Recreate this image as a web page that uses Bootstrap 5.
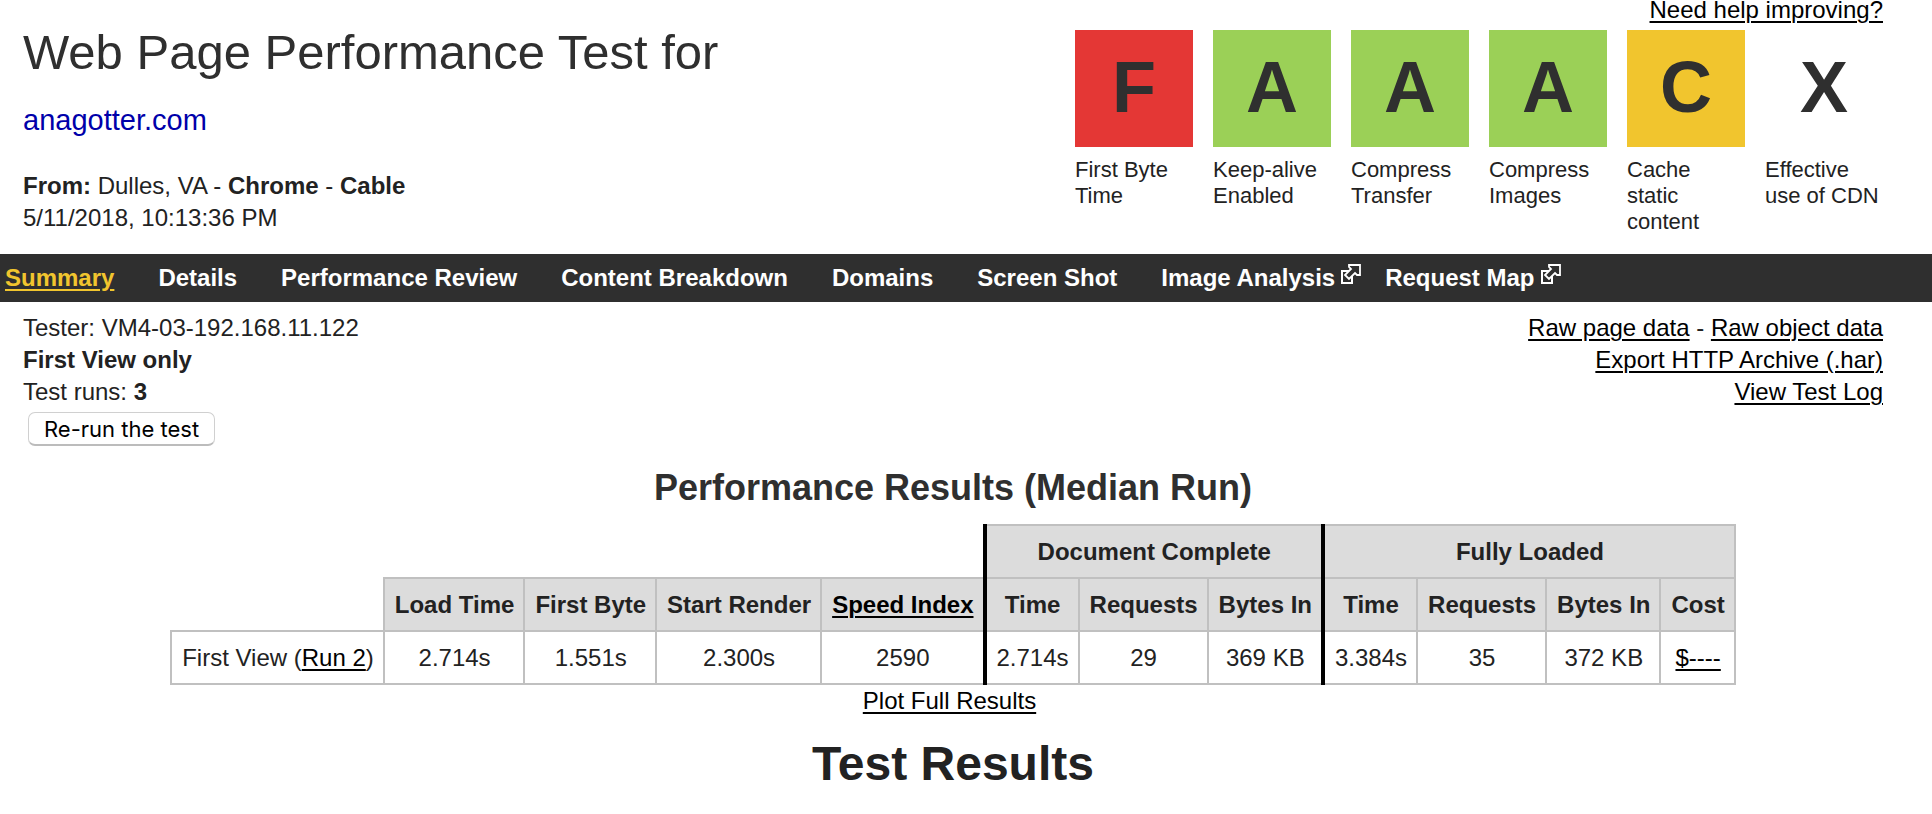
<!DOCTYPE html>
<html lang="en">
<head>
<meta charset="utf-8">
<meta name="viewport" content="width=device-width, initial-scale=1">
<title>Web Page Performance Test for anagotter.com</title>
<link href="https://cdn.jsdelivr.net/npm/bootstrap@5.3.0/dist/css/bootstrap.min.css" rel="stylesheet">
<style>
  body { font: 24px/32px "Liberation Sans", Arial, sans-serif; color: #222; background: #fff; }
  a { color: #000; text-decoration: underline; text-decoration-thickness: 2px; text-underline-offset: 3px; }
  a:hover { color: #444; }
  .page-pad { padding-left: 23px; padding-right: 49px; }

  .site-title { font-size: 49px; font-weight: 400; line-height: 72px; color: #2f2f2f; margin: 16px 0 0; }
  .site-url { font-size: 29px; font-weight: 400; line-height: 44px; margin: 10px 0 28px; }
  .site-url a { color: #00a; text-decoration: none; }

  .help { line-height: 20px; margin-bottom: 10px; }
  .grades { gap: 20px; }
  .grade { width: 118px; font-size: 22px; line-height: 26px; }
  .grade-letter { height: 117px; padding-bottom: 4px; font-size: 72px; font-weight: 700; color: #2f2f2f; margin-bottom: 10px; }
  .g-f { background: #e43735; }
  .g-a { background: #9bd057; }
  .g-c { background: #f1c52e; }

  .site-nav { background: #2f2f2f; margin-top: 19px; padding: 8px 5px; gap: 44px; font-weight: 700; }
  .site-nav a { color: #fff; text-decoration: none; }
  .site-nav a.active { color: #f1c52e; text-decoration: underline; }
  .site-nav .ext { margin-right: -20px; }
  .site-nav svg { width: 20px; height: 20px; margin: 2px 0 10px 6px; }

  .meta { padding-top: 10px; }
  .rerun { margin: 4px 0 0 5px; height: 34px; padding: 0 15px; font: 22px/30px Inter, sans-serif; color: #000; background: #fff; border: 1px solid #d0d0d0; border-bottom: 2px solid #bcbcbc; border-radius: 7px; }

  .section-title { font-size: 36px; line-height: 44px; font-weight: 700; color: #2f2f2f; margin: 20px 0 14px; }
  .results { border-collapse: collapse; line-height: 31px; }
  .results th, .results td { border: 2px solid #c0c0c0; padding: 10px 9px 10px 10px; text-align: center; white-space: nowrap; }
  .results th { background: #dcdcdc; }
  .results .blank { border: 0; background: transparent; }
  .results .split { border-left: 4px solid #000; }
  .plot { padding-right: 7px; }
  .tests-title { font-size: 48px; line-height: 60px; font-weight: 700; margin: 17px 0 0; }
</style>
</head>
<body>
<header class="page-pad d-flex justify-content-between align-items-start">
  <div>
    <h1 class="site-title">Web Page Performance Test for</h1>
    <h2 class="site-url"><a href="#">anagotter.com</a></h2>
    <div><b>From:</b> Dulles, VA - <b>Chrome</b> - <b>Cable</b></div>
    <div>5/11/2018, 10:13:36 PM</div>
  </div>
  <div>
    <div class="help text-end"><a href="#">Need help improving?</a></div>
    <div class="grades d-flex">
      <div class="grade"><div class="grade-letter g-f d-flex align-items-center justify-content-center">F</div>First Byte Time</div>
      <div class="grade"><div class="grade-letter g-a d-flex align-items-center justify-content-center">A</div>Keep-alive Enabled</div>
      <div class="grade"><div class="grade-letter g-a d-flex align-items-center justify-content-center">A</div>Compress Transfer</div>
      <div class="grade"><div class="grade-letter g-a d-flex align-items-center justify-content-center">A</div>Compress Images</div>
      <div class="grade"><div class="grade-letter g-c d-flex align-items-center justify-content-center">C</div>Cache<br>static<br>content</div>
      <div class="grade"><div class="grade-letter d-flex align-items-center justify-content-center">X</div>Effective use of CDN</div>
    </div>
  </div>
</header>

<nav class="site-nav d-flex">
  <a href="#" class="active">Summary</a>
  <a href="#">Details</a>
  <a href="#">Performance Review</a>
  <a href="#">Content Breakdown</a>
  <a href="#">Domains</a>
  <a href="#">Screen Shot</a>
  <a href="#" class="ext d-flex align-items-center">Image Analysis<svg viewBox="0 0 20 20" fill="#2f2f2f" stroke="#fff" stroke-width="2" aria-hidden="true"><path d="M1 7H11V19H1Z"/><path d="M8 1H19V11L16 11L14 9L8 15L4 11L10 5L8 3Z" stroke-width="1.800"/></svg></a>
  <a href="#" class="ext d-flex align-items-center">Request Map<svg viewBox="0 0 20 20" fill="#2f2f2f" stroke="#fff" stroke-width="2" aria-hidden="true"><path d="M1 7H11V19H1Z"/><path d="M8 1H19V11L16 11L14 9L8 15L4 11L10 5L8 3Z" stroke-width="1.800"/></svg></a>
</nav>

<main class="page-pad">
  <div class="meta d-flex justify-content-between">
    <div>
      <div>Tester: VM4-03-192.168.11.122</div>
      <div><b>First View only</b></div>
      <div>Test runs: <b>3</b></div>
      <button type="button" class="rerun d-block">Re-run the test</button>
    </div>
    <div class="text-end">
      <div><a href="#">Raw page data</a> - <a href="#">Raw object data</a></div>
      <div><a href="#">Export HTTP Archive (.har)</a></div>
      <div><a href="#">View Test Log</a></div>
    </div>
  </div>

  <h2 class="section-title text-center">Performance Results (Median Run)</h2>
  <table class="results mx-auto">
    <thead>
      <tr>
        <td class="blank" colspan="5"></td>
        <th class="split" colspan="3">Document Complete</th>
        <th class="split" colspan="4">Fully Loaded</th>
      </tr>
      <tr>
        <td class="blank"></td>
        <th>Load Time</th><th>First Byte</th><th>Start Render</th><th><a href="#">Speed Index</a></th>
        <th class="split">Time</th><th>Requests</th><th>Bytes In</th>
        <th class="split">Time</th><th>Requests</th><th>Bytes In</th><th>Cost</th>
      </tr>
    </thead>
    <tbody>
      <tr>
        <td>First View (<a href="#">Run 2</a>)</td>
        <td>2.714s</td><td>1.551s</td><td>2.300s</td><td>2590</td>
        <td class="split">2.714s</td><td>29</td><td>369 KB</td>
        <td class="split">3.384s</td><td>35</td><td>372 KB</td><td><a href="#">$----</a></td>
      </tr>
    </tbody>
  </table>
  <div class="plot text-center"><a href="#">Plot Full Results</a></div>
  <h1 class="tests-title text-center">Test Results</h1>
</main>
<script src="https://cdn.jsdelivr.net/npm/bootstrap@5.3.0/dist/js/bootstrap.bundle.min.js"></script>
</body>
</html>
